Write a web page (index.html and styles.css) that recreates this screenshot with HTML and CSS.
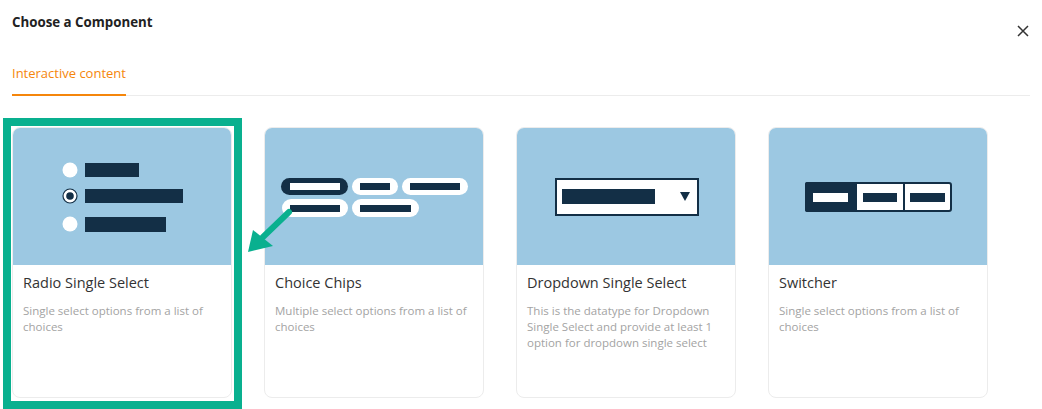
FILE: index.html
```html
<!DOCTYPE html>
<html lang="en">
<head>
    <meta charset="UTF-8">
    <title>Choose a Component</title>
    <link rel="stylesheet" href="styles.css">
</head>
<body>
    <div class="modal">
        <div class="modal-head">
            <h2>Choose a Component</h2>
            <button class="close" aria-label="Close">
                <svg width="12" height="12" viewBox="0 0 12 12"><path d="M1 1L11 11M11 1L1 11" stroke="#333" stroke-width="1.5" fill="none"/></svg>
            </button>
        </div>

        <div class="tabs">
            <span class="tab active">Interactive content</span>
        </div>

        <div class="cards">
            <!-- highlight box and arrow are annotations laid over the grid -->
            <div class="highlight"></div>
            <svg class="pointer" width="60" height="60" viewBox="236 200 60 60">
                <path d="M289 212L263 237" stroke="#09b08f" stroke-width="6" stroke-linecap="round"/>
                <polygon points="248,252 253,230 273,246" fill="#09b08f"/>
            </svg>

            <div class="card">
                <div class="card-img">
                    <svg width="220" height="136" viewBox="0 0 220 136">
                        <circle cx="57" cy="42" r="7.5" fill="#fff"/>
                        <rect x="72" y="35" width="54" height="14" fill="#132f46"/>
                        <circle cx="57" cy="68" r="7" fill="#fff" stroke="#132f46" stroke-width="1.2"/>
                        <circle cx="57" cy="68" r="3.8" fill="#132f46"/>
                        <rect x="72" y="61" width="98" height="14" fill="#132f46"/>
                        <circle cx="57" cy="96" r="7.5" fill="#fff"/>
                        <rect x="72" y="89" width="81" height="15" fill="#132f46"/>
                    </svg>
                </div>
                <div class="card-body">
                    <h3>Radio Single Select</h3>
                    <p>Single select options from a list of choices</p>
                </div>
            </div>

            <div class="card">
                <div class="card-img">
                    <svg width="220" height="136" viewBox="0 0 220 136">
                        <rect x="16" y="50" width="67" height="17" rx="8.5" fill="#132f46"/>
                        <rect x="25" y="55" width="50" height="7" fill="#fff"/>
                        <rect x="87" y="50" width="46" height="17" rx="8.5" fill="#fff"/>
                        <rect x="95" y="55" width="30" height="7" fill="#132f46"/>
                        <rect x="137" y="50" width="66" height="17" rx="8.5" fill="#fff"/>
                        <rect x="145" y="55" width="50" height="7" fill="#132f46"/>
                        <rect x="17" y="71" width="66" height="18" rx="9" fill="#fff"/>
                        <rect x="25" y="77" width="50" height="7" fill="#132f46"/>
                        <rect x="87" y="71" width="67" height="18" rx="9" fill="#fff"/>
                        <rect x="95" y="77" width="51" height="7" fill="#132f46"/>
                    </svg>
                </div>
                <div class="card-body">
                    <h3>Choice Chips</h3>
                    <p>Multiple select options from a list of choices</p>
                </div>
            </div>

            <div class="card">
                <div class="card-img">
                    <svg width="220" height="136" viewBox="0 0 220 136">
                        <rect x="39" y="51" width="142" height="36" fill="#fff" stroke="#132f46" stroke-width="2"/>
                        <rect x="45" y="61" width="93" height="15" fill="#132f46"/>
                        <polygon points="163,64 173,64 168,73" fill="#132f46"/>
                    </svg>
                </div>
                <div class="card-body">
                    <h3>Dropdown Single Select</h3>
                    <p>This is the datatype for Dropdown Single Select and provide at least 1 option for dropdown single select</p>
                </div>
            </div>

            <div class="card">
                <div class="card-img">
                    <svg width="220" height="136" viewBox="0 0 220 136">
                        <rect x="37" y="55" width="145" height="28" rx="2" fill="#fff" stroke="#132f46" stroke-width="2"/>
                        <rect x="36" y="54" width="52" height="30" rx="2" fill="#132f46"/>
                        <rect x="44" y="65" width="35" height="9" fill="#fff"/>
                        <rect x="134" y="54" width="2" height="30" fill="#132f46"/>
                        <rect x="94" y="65" width="34" height="9" fill="#132f46"/>
                        <rect x="141" y="65" width="35" height="9" fill="#132f46"/>
                    </svg>
                </div>
                <div class="card-body">
                    <h3>Switcher</h3>
                    <p>Single select options from a list of choices</p>
                </div>
            </div>
        </div>
    </div>
</body>
</html>
```

FILE: styles.css
```css
body {
    margin: 0;
    background-color: #fff;
    font-family: "Open Sans", "Noto Sans", Arial, sans-serif;
    color: #333;
}
.modal {
    padding: 0 12px 12px;
}
.modal-head {
    display: flex;
    justify-content: space-between;
    height: 40px;
}
.modal-head h2 {
    margin: 0;
    padding-top: 13px;
    font-size: 13.3px;
    line-height: 18px;
    font-weight: 700;
    color: #222;
}
.close {
    margin-top: 25px;
    margin-right: 1px;
    width: 12px;
    height: 12px;
    padding: 0;
    border: none;
    background: none;
    cursor: pointer;
}
.close svg {
    display: block;
}
.tabs {
    margin-top: 24px;
    border-bottom: 1px solid #ececec;
    display: flex;
}
.tab {
    font-size: 13px;
    line-height: 18px;
    padding-bottom: 12px;
    margin-bottom: -1px;
    color: #f5860b;
}
.tab.active {
    border-bottom: 2px solid #f5860b;
}
.cards {
    position: relative;
    margin-top: 31px;
    display: grid;
    grid-template-columns: repeat(4, 220px);
    gap: 32px;
}
.card {
    height: 271px;
    box-sizing: border-box;
    border: 1px solid #ececec;
    border-radius: 8px;
    overflow: hidden;
    background-color: #fff;
}
.card-img {
    height: 137px;
    margin: -1px -1px 0;
    background-color: #9cc8e2;
}
.card-img svg {
    display: block;
    margin: 1px 0 0 1px;
}
.card-body {
    padding: 8px 10px;
}
.card-body h3 {
    margin: 0;
    font-size: 14.5px;
    line-height: 20px;
    font-weight: 400;
    color: #333;
}
.card-body p {
    margin: 10px 0 0;
    font-size: 11.5px;
    line-height: 16px;
    color: #a3a3a3;
}
.highlight {
    position: absolute;
    left: -9px;
    top: -9px;
    width: 223px;
    height: 275px;
    border: 8px solid #09b08f;
}
.pointer {
    position: absolute;
    left: 224px;
    top: 73px;
}
```
